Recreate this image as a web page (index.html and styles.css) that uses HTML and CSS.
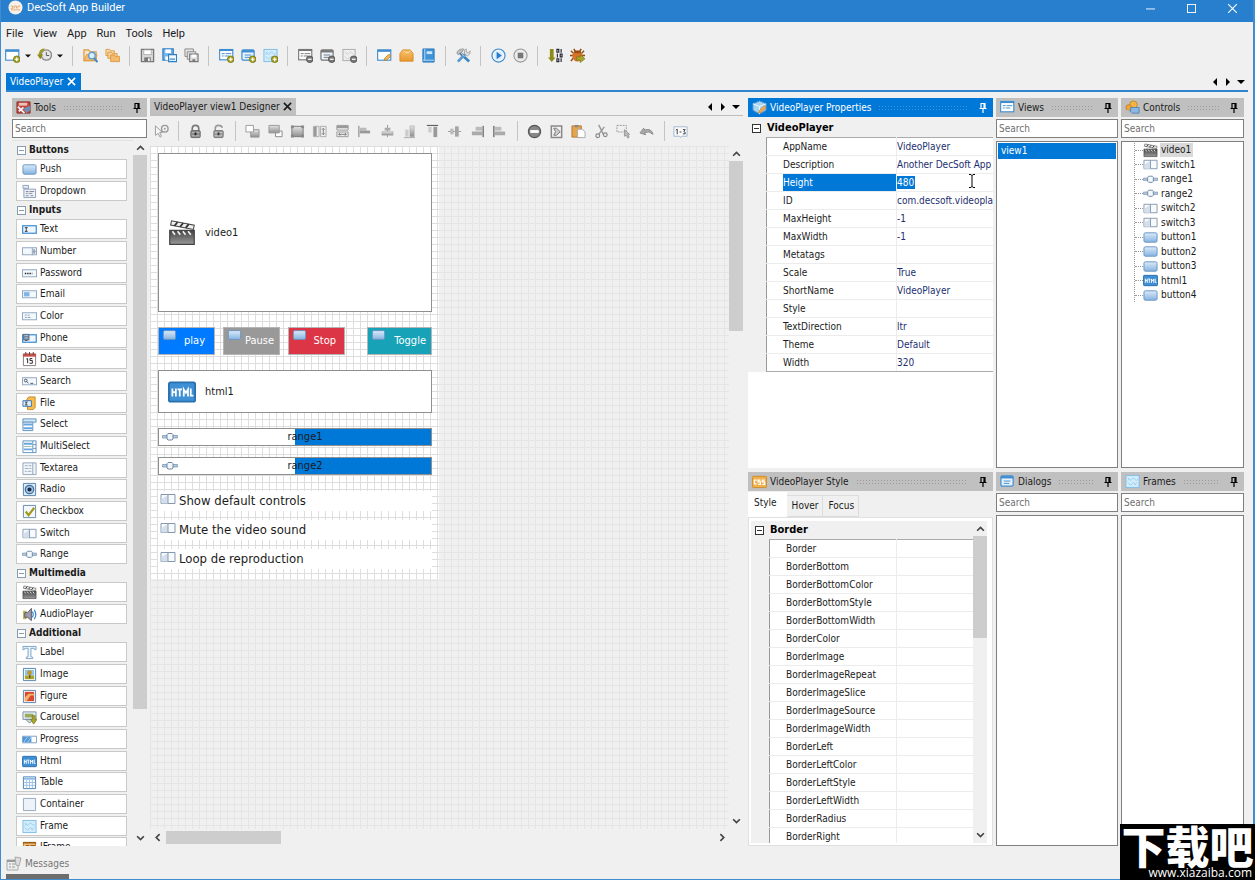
FILE: index.html
```html
<!DOCTYPE html>
<html lang="en">
<head>
<meta charset="utf-8">
<title>DecSoft App Builder</title>
<link rel="stylesheet" href="styles.css">
</head>
<body>
<svg class="sprite" aria-hidden="true">
  <defs>
    <linearGradient id="gBtn" x1="0" y1="0" x2="0" y2="1"><stop offset="0" stop-color="#dcebfa"/><stop offset="1" stop-color="#86b3e0"/></linearGradient>
    <linearGradient id="gGray" x1="0" y1="0" x2="0" y2="1"><stop offset="0" stop-color="#e4e4e4"/><stop offset="1" stop-color="#8f8f8f"/></linearGradient>
    <linearGradient id="gDark" x1="0" y1="0" x2="0" y2="1"><stop offset="0" stop-color="#444"/><stop offset="1" stop-color="#999"/></linearGradient>
    <linearGradient id="gFold" x1="0" y1="0" x2="0" y2="1"><stop offset="0" stop-color="#f7c06c"/><stop offset="1" stop-color="#e8992f"/></linearGradient>
  </defs>
  <symbol id="plus" viewBox="0 0 16 16"><circle cx="12.500" cy="12" r="3.500" fill="#a8a52a" stroke="#7d7a14"/><path d="M12.500 10v4M10.500 12h4" stroke="#fff" stroke-width="1.300"/></symbol>
  <symbol id="minus" viewBox="0 0 16 16"><circle cx="12.500" cy="12" r="3.500" fill="#777" stroke="#555"/><path d="M10.500 12h4" stroke="#fff" stroke-width="1.300"/></symbol>
  <symbol id="win" viewBox="0 0 16 16"><rect x=".7" y="2" width="14" height="11" fill="#fff" stroke="currentColor" stroke-width="1.200"/><path d="M1 3h14" stroke="currentColor" stroke-width="2.200"/></symbol>
  <symbol id="winlist" viewBox="0 0 16 16"><rect x=".7" y="1.600" width="14" height="11" fill="#fff" stroke="currentColor" stroke-width="1.200"/><path d="M1 2.500h14" stroke="currentColor" stroke-width="1.500"/><path d="M3 6h3M7 6h6M3 8.500h2M6 8.500h5" stroke="currentColor"/></symbol>
  <symbol id="dialog" viewBox="0 0 16 16"><rect x="1" y="2" width="13" height="11" rx="1.500" fill="#e8f2fc" stroke="currentColor" stroke-width="1.300"/><path d="M1 3.500h13" stroke="currentColor" stroke-width="2.500"/><path d="M4 7.500h7M4 10h6" stroke="currentColor"/></symbol>
  <symbol id="frame" viewBox="0 0 16 16"><rect x="1" y="1.500" width="14" height="13" fill="#d3ecfb" stroke="#7dbce6"/><path d="M3 4l3 3 3-3 3 3 2-2M3 9l3 3 3-3 3 3M3 7l2-2M10 12l3-3" stroke="#8fcdf0" fill="none"/></symbol>
  <symbol id="framegray" viewBox="0 0 16 16"><rect x="1" y="1.500" width="13" height="12" fill="#eee" stroke="#aaa"/><path d="M3 4l3 3 3-3 3 3M3 9l3 3 3-3" stroke="#ccc" fill="none"/></symbol>
  <symbol id="clock" viewBox="0 0 16 16"><circle cx="10" cy="7.500" r="5.500" fill="#e5e5e5" stroke="#888" stroke-width="1.400"/><path d="M10 4.500v3.500h3" stroke="#555" fill="none"/><path d="M8 1.500Q3 2 3 8" stroke="#a09c22" stroke-width="2.500" fill="none"/><path d="M0 7h6.500L3.500 12z" fill="#8f8b16"/></symbol>
  <symbol id="folder" viewBox="0 0 16 16"><path d="M1 13.500V2h5l1.500 2H14v9.500z" fill="#fbe3bd" stroke="#dc9b45" stroke-width="1.300"/><path d="M1 13.500L4 7h11l-2 6.500z" fill="#f2bb6d" stroke="#dc9b45"/></symbol>
  <symbol id="foldsearch" viewBox="0 0 16 16"><use href="#folder"/><circle cx="9.500" cy="8" r="3.500" fill="#d9edfb" stroke="#5a9bd2" stroke-width="1.400"/><path d="M12 11l3.500 4" stroke="#3b84c6" stroke-width="2"/></symbol>
  <symbol id="folders" viewBox="0 0 16 16"><path d="M1 8V1.500h4L6 3h4v5z" fill="#fbdcae" stroke="#dc9b45"/><path d="M3 11V4.500h4L8 6h5v5z" fill="#f8cf96" stroke="#dc9b45"/><path d="M6 14.500V7.500h4L11 9h4.500v5.500z" fill="#f2bb6d" stroke="#dc9b45"/></symbol>
  <symbol id="save" viewBox="0 0 16 16"><path d="M1.500 1.500h13v13h-13z" fill="#d8d8d8" stroke="#777" stroke-width="1.400"/><path d="M4 2h8v5H4z" fill="#fff" stroke="#999" stroke-width=".7"/><path d="M4.500 10h7v4.500h-7z" fill="#777"/><path d="M8.500 11h2v3h-2z" fill="#eee"/></symbol>
  <symbol id="saveas" viewBox="0 0 16 16"><path d="M1 1h11v12H1z" fill="#77b4e8" stroke="#2f7fc6" stroke-width="1.300"/><path d="M3.500 1.500h6v4h-6z" fill="#fff"/><path d="M3.500 9h4v4h-4z" fill="#fff"/><path d="M7 7h8.500v7.500H7z" fill="#f3f9ff" stroke="#2f7fc6" stroke-width="1.200"/><path d="M8 11h6v2H8z" fill="#69a9e0"/></symbol>
  <symbol id="saveall" viewBox="0 0 16 16"><path d="M1 1h9v8H1z" fill="#e5e5e5" stroke="#888"/><path d="M3.500 4h9v8h-9z" fill="#e5e5e5" stroke="#888"/><path d="M6 6.500h9v8H6z" fill="#ddd" stroke="#777" stroke-width="1.200"/><path d="M8 7h5v3H8z" fill="#fff"/><path d="M9 12h3v2.500H9z" fill="#777"/></symbol>
  <symbol id="edit" viewBox="0 0 16 16"><use href="#win"/><path d="M7.500 13.500l1-3 4.500-4 2 2-4.500 4z" fill="#f3bb57" stroke="#a67a2e" stroke-width=".8"/></symbol>
  <symbol id="box" viewBox="0 0 16 16"><path d="M1 6l3-4h8l3 4v8H1z" fill="url(#gFold)" stroke="#d88c2a"/><path d="M5 3l2 2h3l2-2" stroke="#fce0b0" fill="none"/></symbol>
  <symbol id="book" viewBox="0 0 16 16"><path d="M2 1h12v14H2z" fill="#3f93d8" stroke="#2c78b9"/><path d="M4 1v12M2 13h12" stroke="#b9dcf6"/><path d="M6 3.500h6v3H6z" fill="#cde7fa"/></symbol>
  <symbol id="toolsx" viewBox="0 0 16 16"><path d="M4 5l10 9.500" stroke="#3f86c6" stroke-width="3"/><path d="M2 14.500L11 5" stroke="#5d9bd2" stroke-width="3"/><path d="M1 6q0-5 7-5l-1 3-3 1-1 2z" fill="#c0c0c0" stroke="#999"/><path d="M9 6V2l2-1v3l2 1 2-2v3l-3 2.500z" fill="#ddd" stroke="#999" stroke-width=".8"/><path d="M5 5l4 4" stroke="#e4b898"/></symbol>
  <symbol id="play" viewBox="0 0 16 16"><circle cx="8" cy="8" r="7" fill="#d8ecfb" stroke="#3d8bce" stroke-width="1.200"/><circle cx="8" cy="8" r="5.200" fill="none" stroke="#fff"/><path d="M6 4l5.500 4L6 12z" fill="#2b7cc8"/></symbol>
  <symbol id="stop" viewBox="0 0 16 16"><circle cx="8" cy="8" r="7" fill="#ececec" stroke="#999" stroke-width="1.200"/><path d="M5 5h6v6H5z" fill="#777"/></symbol>
  <symbol id="binary" viewBox="0 0 16 16"><path d="M2 1h4v9h2l-4 5-4-5h2z" fill="#8e8a18"/><g stroke="#223" fill="none" stroke-width="1.200"><path d="M9.500 1.500h2v3h-2zM14 1v4M10 6v4M13 6.500h2v3h-2zM9.500 11.500h2v3h-2zM14 11v4"/></g></symbol>
  <symbol id="bug" viewBox="0 0 16 16"><path d="M1 3l3 3M15 3l-3 3M0 8h4M16 8h-4M1 14l3-4M4 1l2 3M12 1l-2 3" stroke="#8a4a12" stroke-width="1.500"/><ellipse cx="8" cy="8.500" rx="5.500" ry="6" fill="#d9722a"/><path d="M4.500 3h7v2.500h-7z" fill="#9a4c16"/><path d="M7 9.500h4V7l5 4.500-5 4V13H7z" fill="#a8a52a" stroke="#777414" stroke-width=".7"/></symbol>
  <symbol id="pin" viewBox="0 0 8 10"><path d="M2 .5h4v5H2zM5 1v4M.5 5.500h7M4 6v4" fill="none" stroke="currentColor" stroke-width="1.200"/></symbol>
  <symbol id="x" viewBox="0 0 10 10"><path d="M1 1l8 8M9 1L1 9" stroke="currentColor" stroke-width="1.800"/></symbol>
  <symbol id="up" viewBox="0 0 8 8"><path d="M1 6l3-3 3 3" fill="none" stroke="currentColor" stroke-width="1.500"/></symbol>
  <symbol id="dn" viewBox="0 0 8 8"><path d="M1 2l3 3 3-3" fill="none" stroke="currentColor" stroke-width="1.500"/></symbol>
  <symbol id="lt" viewBox="0 0 8 8"><path d="M5 1L2 4l3 3" fill="none" stroke="currentColor" stroke-width="1.500"/></symbol>
  <symbol id="rt" viewBox="0 0 8 8"><path d="M3 1l3 3-3 3" fill="none" stroke="currentColor" stroke-width="1.500"/></symbol>
  <symbol id="tl" viewBox="0 0 8 8"><path d="M6 0v8L2 4z" fill="currentColor"/></symbol>
  <symbol id="tr" viewBox="0 0 8 8"><path d="M2 0v8l4-4z" fill="currentColor"/></symbol>
  <symbol id="td" viewBox="0 0 8 8"><path d="M0 2h8L4 6z" fill="currentColor"/></symbol>
  <symbol id="exp" viewBox="0 0 9 9"><rect x=".5" y=".5" width="8" height="8" fill="#fff" stroke="currentColor"/><path d="M2 4.500h5" stroke="currentColor"/></symbol>

  <symbol id="pointer" viewBox="0 0 16 16"><path d="M1.500 2v10l3-2 2 4 1.500-1-2-4h3z" fill="#f6f6f6" stroke="#999"/><circle cx="11.500" cy="5" r="3.500" fill="none" stroke="#999" stroke-width="1.500"/><circle cx="11.500" cy="5" r="1" fill="#999"/></symbol>
  <symbol id="lock" viewBox="0 0 16 16"><path d="M4.500 7V5q0-3.500 3.500-3.500T11.500 5v2" fill="none" stroke="#777" stroke-width="1.700"/><rect x="3" y="7" width="10" height="7.500" rx="1" fill="#8c8c8c" stroke="#666"/><path d="M4 9h8M4 12.500h8" stroke="#bbb"/><path d="M8 9v3" stroke="#222" stroke-width="2"/></symbol>
  <symbol id="unlock" viewBox="0 0 16 16"><path d="M4.500 7V5q0-3.500 3.500-3.500T12 4" fill="none" stroke="#999" stroke-width="1.700"/><rect x="3" y="7" width="10" height="7.500" rx="1" fill="#9c9c9c" stroke="#777"/><path d="M4 9h8M4 12.500h8" stroke="#c4c4c4"/><path d="M8 9v3" stroke="#333" stroke-width="2"/></symbol>
  <symbol id="front" viewBox="0 0 16 16"><path d="M6 6h9v8H6z" fill="url(#gGray)" stroke="#999"/><path d="M1 1.500h8v7H1z" fill="#fff" stroke="#999"/></symbol>
  <symbol id="back" viewBox="0 0 16 16"><path d="M8 7.500h7v6H8z" fill="#fff" stroke="#888"/><path d="M1 1.500h11v8H1z" fill="url(#gGray)" stroke="#999"/></symbol>
  <symbol id="sizebox" viewBox="0 0 16 16"><path d="M2 2.500h12v11H2z" fill="url(#gGray)" stroke="#777"/><path d="M1 1.500h3v3H1zM12 1.500h3v3h-3zM1 11.500h3v3H1zM12 11.500h3v3h-3z" fill="#888"/></symbol>
  <symbol id="sameh" viewBox="0 0 16 16"><path d="M1.500 2.500h6v11h-6zM9 2.500h6v11H9z" fill="#eee" stroke="#aaa"/><path d="M2 3h3v10H2z" fill="#999"/><path d="M12 5v6M10.500 6L12 4.500 13.500 6M10.500 10l1.500 1.500 1.500-1.500" stroke="#777" fill="none"/></symbol>
  <symbol id="samew" viewBox="0 0 16 16"><path d="M2 1.500h12v5H2zM2 8.500h12v5H2z" fill="#eee" stroke="#999"/><path d="M2 2h12v2.500H2z" fill="#999"/><path d="M4 11h8M5.500 9.500L4 11l1.500 1.500M10.500 9.500L12 11l-1.500 1.500" stroke="#777" fill="none"/></symbol>
  <symbol id="al" viewBox="0 0 16 16"><path d="M2 2v12" stroke="#777"/><path d="M3 4h7v3H3z" fill="#bbb"/><path d="M3 7h11v3H3z" fill="#999"/></symbol>
  <symbol id="ac" viewBox="0 0 16 16"><path d="M8 1v13" stroke="#999"/><path d="M5 4h6v3H5z" fill="#aaa"/><path d="M2 8h12v4H2z" fill="url(#gGray)" stroke="#aaa" stroke-width=".5"/></symbol>
  <symbol id="ab" viewBox="0 0 16 16"><path d="M2 14.500h12" stroke="#aaa"/><path d="M3.500 6h3.500v7.500H3.500z" fill="#ccc"/><path d="M8.500 2H13v11.500H8.500z" fill="url(#gGray)" stroke="#999" stroke-width=".5"/></symbol>
  <symbol id="at" viewBox="0 0 16 16"><path d="M2 1.500h12" stroke="#444"/><path d="M3.500 3H7v6H3.500z" fill="#ccc"/><path d="M9 3h4v11H9z" fill="#999"/></symbol>
  <symbol id="am" viewBox="0 0 16 16"><path d="M1 8h14" stroke="#999"/><path d="M3.500 5H7v6H3.500z" fill="#bbb"/><path d="M8.500 2.500h4v11h-4z" fill="#a5a5a5"/></symbol>
  <symbol id="ar" viewBox="0 0 16 16"><path d="M14 2v12" stroke="#333"/><path d="M6 3h7v4H6z" fill="#bbb"/><path d="M2 8h11v4H2z" fill="#aaa"/></symbol>
  <symbol id="al2" viewBox="0 0 16 16"><path d="M2 2v12" stroke="#333"/><path d="M3 3h7v4H3z" fill="#bbb"/><path d="M3 8h11v4H3z" fill="#aaa"/></symbol>
  <symbol id="remove" viewBox="0 0 16 16"><circle cx="8" cy="8" r="6.500" fill="#888" stroke="#555" stroke-width="1.300"/><path d="M3.500 6.500h9v3h-9z" fill="#fff"/></symbol>
  <symbol id="copy" viewBox="0 0 16 16"><path d="M2.500 2h11v12.500h-11z" fill="#f4f4f4" stroke="#888" stroke-width="1.600"/><path d="M5 4.500h3l4 3.800-4 3.700H5l2-3.700z" fill="#ccc" stroke="#777"/></symbol>
  <symbol id="paste" viewBox="0 0 16 16"><path d="M1 2h10v12H1z" fill="#e5a550" stroke="#b77b2c"/><path d="M4 1h4v2.500H4z" fill="#888"/><path d="M7 5.500h5l3 3v6H7z" fill="#fff" stroke="#aaa"/></symbol>
  <symbol id="cut" viewBox="0 0 16 16"><path d="M5 1l5 10M11 3L5 11" stroke="#999" stroke-width="1.500"/><circle cx="4" cy="12.500" r="2" fill="none" stroke="#888" stroke-width="1.300"/><circle cx="12" cy="11.500" r="2" fill="none" stroke="#888" stroke-width="1.300"/></symbol>
  <symbol id="select" viewBox="0 0 16 16"><path d="M1 1.500h10v7H1z" fill="none" stroke="#999" stroke-dasharray="2 1"/><path d="M9 6v7l2-1 1.500 3 1.500-1-1.500-3h2z" fill="#bbb" stroke="#999"/></symbol>
  <symbol id="undo" viewBox="0 0 16 16"><path d="M15 11Q13 4 6 6.500L5 4.500 1 9.500l6 2-1-2.500q5-2 9 2z" fill="#aaa" stroke="#888"/></symbol>
  <symbol id="order" viewBox="0 0 16 16"><path d="M1 3h14v10H9l-1 1.500L7 13H1z" fill="#fff" stroke="#9db3cc"/><path d="M3 6.500l1.500-1V11M7 8.500h2M10.500 6H13L11.500 8 13 9v1.500h-2.500" stroke="#333" fill="none"/></symbol>

  <symbol id="push" viewBox="0 0 16 16"><rect x="1" y="3" width="14" height="10" rx="1.500" fill="url(#gBtn)" stroke="#6893c0"/></symbol>
  <symbol id="drop" viewBox="0 0 16 16"><path d="M1 1.500h6v3H1zM2 5.500h12.500v9H2z" fill="#edf2f9" stroke="#8b9db8"/><path d="M4 8h3M8 8h5M4 10h2M7 10h4M4 12.500h3M9 12.500h3" stroke="#889"/></symbol>
  <symbol id="field" viewBox="0 0 16 16"><rect x=".5" y="4" width="15" height="7.500" fill="#f3f8fd" stroke="#8ea6bf"/></symbol>
  <symbol id="text" viewBox="0 0 16 16"><rect x=".7" y="4" width="14.500" height="8" fill="#eef7ff" stroke="#3f8dd0" stroke-width="1.300"/><path d="M3 6h3M3 10h3M4.500 6v4" stroke="#333"/></symbol>
  <symbol id="number" viewBox="0 0 16 16"><use href="#field"/><path d="M11 4v8M11 8h4" stroke="#8ea6bf"/><path d="M12 6.500h2M12 9.500h2" stroke="#456"/></symbol>
  <symbol id="password" viewBox="0 0 16 16"><use href="#field"/><path d="M3 8h8" stroke="#222" stroke-width="1.500" stroke-dasharray="1.500 1"/></symbol>
  <symbol id="email" viewBox="0 0 16 16"><use href="#field"/><path d="M2 5.500h6V10H2z" fill="#7fb5e6"/></symbol>
  <symbol id="color" viewBox="0 0 16 16"><use href="#field"/><path d="M3 6.500h2M3 9h2M6 6.500h2M6 9h3" stroke="#89a"/></symbol>
  <symbol id="phone" viewBox="0 0 16 16"><use href="#text"/><path d="M1 3h7v7H1z" fill="#667b90"/><path d="M2.500 5h4M2.500 7.500h4" stroke="#c9d5e2"/></symbol>
  <symbol id="date" viewBox="0 0 16 16"><path d="M1.500 2h13v12.500h-13z" fill="#fff" stroke="#877"/><path d="M1 2h14v3H1z" fill="#c4524a"/><path d="M4 0v3M8 0v3M12 0v3" stroke="#733"/><path d="M4.500 7.500L6 7v5M11 7H8.500v2H11v3H8" stroke="#222" fill="none"/></symbol>
  <symbol id="search" viewBox="0 0 16 16"><use href="#field"/><circle cx="4" cy="7" r="1.500" fill="none" stroke="#456"/><path d="M5 8l2 2M9 10h3" stroke="#456"/></symbol>
  <symbol id="file" viewBox="0 0 16 16"><path d="M5 4l2-3h7v11l-2 2.500H6z" fill="#f6bd4e" stroke="#c4882a"/><path d="M1 5h9v6H1z" fill="#e2effb" stroke="#3672ae"/><path d="M3 6.500h3M3 9.500h3M4.500 6.500v3" stroke="#345"/></symbol>
  <symbol id="sel" viewBox="0 0 16 16"><path d="M1 2h14v3.500H1z" fill="#d7e9f8" stroke="#5d8fbd"/><path d="M1 5.500h10.500v9H1z" fill="#fff" stroke="#5d8fbd"/><path d="M1.500 8h10M1.500 12h10" stroke="#6aa6dc" stroke-width="2"/></symbol>
  <symbol id="msel" viewBox="0 0 16 16"><path d="M1 2h14v12.500H1z" fill="#fff" stroke="#5d8fbd"/><path d="M11.500 2v12.500M12 6h3M12 10h3" stroke="#5d8fbd"/><path d="M2 5h9M2 11h9" stroke="#6aa6dc" stroke-width="2"/><path d="M2 8h8" stroke="#9bb"/></symbol>
  <symbol id="tarea" viewBox="0 0 16 16"><path d="M1 2h14v12.500H1z" fill="#f2f6fa" stroke="#8fa4ba"/><path d="M11.500 2v12.500" stroke="#8fa4ba"/><path d="M3 5h3M7 5h3M3 8h4M8 8h2M3 11h2M6 11h4" stroke="#9ab"/></symbol>
  <symbol id="radio" viewBox="0 0 16 16"><path d="M1.500 1.500h13v13h-13z" fill="#dcebf9" stroke="#5581ab"/><circle cx="8" cy="8" r="4.500" fill="#a4c3e2" stroke="#466f9a" stroke-width="1.300"/><circle cx="8" cy="8" r="2.200" fill="#182c46"/></symbol>
  <symbol id="check" viewBox="0 0 16 16"><path d="M1.500 1.500h13v13h-13z" fill="#f4f8fc" stroke="#6488ad"/><path d="M4 8l3 4 6-8" stroke="#a19a1a" stroke-width="2.300" fill="none"/></symbol>
  <symbol id="switch" viewBox="0 0 16 16"><path d="M1 3.500h14v9H1z" fill="#f7fafd" stroke="#8698ad"/><path d="M8 4v8.500H1.500V8z" fill="#d3dfec"/><path d="M8 3.500v9" stroke="#8698ad"/></symbol>
  <symbol id="range" viewBox="0 0 16 16"><path d="M.5 6.500h15v2.500H.5z" fill="#b3c9df" stroke="#8099b3" stroke-width=".8"/><path d="M5 5.500l1-1h4l1 1v4.500l-1 1H6l-1-1z" fill="#f4f8fc" stroke="#6c87a5"/></symbol>
  <symbol id="clap" viewBox="0 0 16 16"><path d="M1 6.500h14v8H1z" fill="url(#gDark)" stroke="#444" stroke-width=".7"/><path d="M1.500 3.500l.5-2.500 13 2.500-.5 2.500z" fill="#eee" stroke="#444" stroke-width=".6"/><path d="M5.500 1.700L3.700 3.900M8.700 2.300L6.900 4.500M11.900 2.900L10.100 5.100" stroke="#333" stroke-width="1"/><path d="M2.500 7L4 9M5.500 7L7 9M8.500 7L10 9M11.500 7L13 9" stroke="#eee" stroke-width="1"/></symbol>
  <symbol id="audio" viewBox="0 0 16 16"><path d="M1 4h4v9H1z" fill="#bdb85c"/><path d="M3 6h3l4-4.500v13L6 11H3z" fill="#9c9cae" stroke="#556"/><path d="M11 5q2 3 0 6M13 3q3.500 5 0 10" stroke="#3d85c6" stroke-width="1.300" fill="none"/></symbol>
  <symbol id="label" viewBox="0 0 16 16"><path d="M1 1.500h14V5h-1.500L13 3.500H9.500v9l2 .5v1.500h-7V13l2-.5v-9H3L2.500 5H1z" fill="#eef6fd" stroke="#7a9fc4"/></symbol>
  <symbol id="image" viewBox="0 0 16 16"><path d="M1.500 1.500h13v13h-13z" fill="#fff" stroke="#5581ab"/><path d="M3 3h10v6H3z" fill="#8fc7f1"/><path d="M3 9h10v4H3z" fill="#a8a52a"/><path d="M7.500 7h1.500v5H7.500z" fill="#654"/><circle cx="8" cy="6" r="2.500" fill="#bf9a26"/></symbol>
  <symbol id="figure" viewBox="0 0 16 16"><path d="M1.500 1.500h13v13h-13z" fill="#fff" stroke="#5581ab"/><path d="M3 3h10v10H3z" fill="#d9482f"/><path d="M3 9l4-4h6v2H9l-4 6H3z" fill="#f3b26b"/></symbol>
  <symbol id="carousel" viewBox="0 0 16 16"><path d="M1 2h14v8H1z" fill="#e3eef8" stroke="#7d8fa5"/><path d="M3 4h9v4H3z" fill="#9aab5a"/><path d="M4 10h8l-4 4z" fill="#cdd" stroke="#789"/><path d="M11 6h3v4h2l-3.500 5L9 10h2z" fill="#a8a52a" stroke="#777414" stroke-width=".7"/></symbol>
  <symbol id="progress" viewBox="0 0 16 16"><path d="M.5 4.500h15v7H.5z" fill="#fff" stroke="#7b9cbe"/><path d="M1 5h9v6H1z" fill="#4f97d6"/><path d="M2 11l4-6M6 11l4-6" stroke="#a9d0f1"/></symbol>
  <symbol id="html" viewBox="0 0 16 16"><rect x=".5" y="2.500" width="15" height="11" rx="1" fill="#3f8fd4" stroke="#2a6fae"/><path d="M2.500 6v4.500M4.500 6v4.500M2.500 8h2M5.500 6.500h2.500M6.700 6.500v4M9 10.500V6.500l1.200 2 1.200-2v4M13 6v4h1.500" stroke="#fff" fill="none"/></symbol>
  <symbol id="table" viewBox="0 0 16 16"><path d="M1.500 2h13v12.500h-13z" fill="#fff" stroke="#4580b5"/><path d="M2 3h12v2H2z" fill="#8cbce8"/><path d="M5 5v9M8 5v9M11 5v9M2 8h12M2 11h12" stroke="#9cc0e0"/></symbol>
  <symbol id="container" viewBox="0 0 16 16"><path d="M1.500 1.500h13v13h-13z" fill="#eef3fa" stroke="#91a5bd"/></symbol>
  <symbol id="iframe" viewBox="0 0 16 16"><path d="M1.500 2.500h13v12h-13z" fill="#f0c078" stroke="#b57424"/><path d="M1 3h14M4 6h3v4M9 6h4v4" stroke="#9a5c18" stroke-width="1.500" fill="none"/></symbol>
  <symbol id="toolbox" viewBox="0 0 16 16"><path d="M1 2h14v12H1z" fill="#c4453b" stroke="#8c2f28"/><path d="M3 3h9v3H3z" fill="#eac2be"/><path d="M2 7l7 7M3 12l5-4" stroke="#e8eef5" stroke-width="2"/><path d="M8 9l7-3v5l-4 3z" fill="#6e8fb5"/></symbol>
  <symbol id="cube" viewBox="0 0 16 16"><path d="M8 1l7 3v7l-7 4-7-4V4z" fill="#a9d5f5" stroke="#4a92cf"/><path d="M1 4l7 3 7-3M8 7v8" stroke="#f2f9ff" fill="none"/><path d="M7 14l1-3 5-5 2 2-5 5z" fill="#f3ae4f" stroke="#b77b2c" stroke-width=".7"/></symbol>
  <symbol id="controls" viewBox="0 0 16 16"><circle cx="9" cy="5" r="4" fill="#f5b545" stroke="#c98a22"/><circle cx="4" cy="8" r="3" fill="#f0a53d" stroke="#c47f22"/><path d="M6 8h9v6H6z" fill="#8ab7e4" stroke="#5584b3"/><path d="M2 11l5 4" stroke="#bbb" stroke-width="2"/></symbol>
  <symbol id="css" viewBox="0 0 16 16"><rect x=".5" y="2.500" width="15" height="12" rx="1" fill="#f0b04c" stroke="#cf8a28"/><path d="M5 6.500H2.500v4H5M9 6.500H6.500v2H9v2.500H6.500M13.500 6.500H11v2h2.500v2.500H11" stroke="#fff" stroke-width="1.300" fill="none"/></symbol>
  <symbol id="msg" viewBox="0 0 16 16"><path d="M1 4h11v10H1z" fill="#eee" stroke="#aaa"/><path d="M1 5h11" stroke="#999" stroke-width="2"/><path d="M3 8h2M6 8h4M3 11h2M6 11h3" stroke="#999"/><path d="M9 1l6 1-2 8-3-1z" fill="#ddd" stroke="#aaa"/></symbol>
</svg>

<div class="window">
  <header class="titlebar">
    <svg class="logo" viewBox="0 0 16 16"><circle cx="8" cy="8" r="7.500" fill="#f7f1ea"/><path d="M3 9h2V6.500H3M6.500 9V6.500H9V9M10.500 9V6.500H13M3 10.500h10" stroke="#e5a66c" fill="none"/></svg>
    <h1>DecSoft App Builder</h1>
    <div class="caption">
      <button aria-label="Minimize"><svg viewBox="0 0 10 10"><path d="M0 5.500h10" stroke="#fff"/></svg></button>
      <button aria-label="Maximize"><svg viewBox="0 0 10 10"><rect x=".5" y=".5" width="9" height="9" fill="none" stroke="#fff"/></svg></button>
      <button aria-label="Close"><svg viewBox="0 0 10 10"><path d="M0 0l10 10M10 0L0 10" stroke="#fff" stroke-width="1.200"/></svg></button>
    </div>
  </header>
  <nav class="menubar">
    <button>File</button><button>View</button><button>App</button><button>Run</button><button>Tools</button><button>Help</button>
  </nav>
  <div class="toolbar main-tools">
    <button class="drop blue" aria-label="New"><svg><use href="#win"/><use href="#plus"/></svg><svg class="caret"><use href="#td"/></svg></button>
    <button class="drop" aria-label="Recent"><svg><use href="#clock"/></svg><svg class="caret"><use href="#td"/></svg></button>
    <i></i>
    <button aria-label="Open"><svg><use href="#foldsearch"/></svg></button>
    <button aria-label="Open samples"><svg><use href="#folders"/></svg></button>
    <i></i>
    <button aria-label="Save"><svg><use href="#save"/></svg></button>
    <button aria-label="Save as"><svg><use href="#saveas"/></svg></button>
    <button aria-label="Save all"><svg><use href="#saveall"/></svg></button>
    <i></i>
    <button class="blue" aria-label="Add view"><svg><use href="#winlist"/><use href="#plus"/></svg></button>
    <button class="blue" aria-label="Add dialog"><svg><use href="#dialog"/><use href="#plus"/></svg></button>
    <button aria-label="Add frame"><svg><use href="#frame"/><use href="#plus"/></svg></button>
    <i></i>
    <button class="gray" aria-label="Remove view"><svg><use href="#winlist"/><use href="#minus"/></svg></button>
    <button class="gray" aria-label="Remove dialog"><svg><use href="#dialog"/><use href="#minus"/></svg></button>
    <button aria-label="Remove frame"><svg><use href="#framegray"/><use href="#minus"/></svg></button>
    <i></i>
    <button class="blue" aria-label="Edit"><svg><use href="#edit"/></svg></button>
    <button aria-label="Files"><svg><use href="#box"/></svg></button>
    <button aria-label="Manual"><svg><use href="#book"/></svg></button>
    <i></i>
    <button aria-label="Options"><svg><use href="#toolsx"/></svg></button>
    <i></i>
    <button aria-label="Run"><svg><use href="#play"/></svg></button>
    <button aria-label="Stop"><svg><use href="#stop"/></svg></button>
    <i></i>
    <button aria-label="Build"><svg><use href="#binary"/></svg></button>
    <button aria-label="Debug"><svg><use href="#bug"/></svg></button>
  </div>
  <div class="apptabs">
    <div class="apptab">VideoPlayer <button aria-label="Close VideoPlayer"><svg><use href="#x"/></svg></button></div>
    <div class="tabnav"><button aria-label="Previous"><svg><use href="#tl"/></svg></button><button aria-label="Next"><svg><use href="#tr"/></svg></button><button aria-label="List"><svg><use href="#td"/></svg></button></div>
  </div>

  <main class="workspace">
    <section class="panel tools">
      <h2 class="head"><svg><use href="#toolbox"/></svg>Tools<span class="dots"></span><svg class="pin"><use href="#pin"/></svg></h2>
      <input class="find" type="text" placeholder="Search" aria-label="Search tools">
      <div class="scroller">
        <div class="toollist">
          <h3><svg><use href="#exp"/></svg>Buttons</h3>
          <ul>
            <li><button><svg><use href="#push"/></svg>Push</button></li>
            <li><button><svg><use href="#drop"/></svg>Dropdown</button></li>
          </ul>
          <h3><svg><use href="#exp"/></svg>Inputs</h3>
          <ul>
            <li><button><svg><use href="#text"/></svg>Text</button></li>
            <li><button><svg><use href="#number"/></svg>Number</button></li>
            <li><button><svg><use href="#password"/></svg>Password</button></li>
            <li><button><svg><use href="#email"/></svg>Email</button></li>
            <li><button><svg><use href="#color"/></svg>Color</button></li>
            <li><button><svg><use href="#phone"/></svg>Phone</button></li>
            <li><button><svg><use href="#date"/></svg>Date</button></li>
            <li><button><svg><use href="#search"/></svg>Search</button></li>
            <li><button><svg><use href="#file"/></svg>File</button></li>
            <li><button><svg><use href="#sel"/></svg>Select</button></li>
            <li><button><svg><use href="#msel"/></svg>MultiSelect</button></li>
            <li><button><svg><use href="#tarea"/></svg>Textarea</button></li>
            <li><button><svg><use href="#radio"/></svg>Radio</button></li>
            <li><button><svg><use href="#check"/></svg>Checkbox</button></li>
            <li><button><svg><use href="#switch"/></svg>Switch</button></li>
            <li><button><svg><use href="#range"/></svg>Range</button></li>
          </ul>
          <h3><svg><use href="#exp"/></svg>Multimedia</h3>
          <ul>
            <li><button><svg><use href="#clap"/></svg>VideoPlayer</button></li>
            <li><button><svg><use href="#audio"/></svg>AudioPlayer</button></li>
          </ul>
          <h3><svg><use href="#exp"/></svg>Additional</h3>
          <ul>
            <li><button><svg><use href="#label"/></svg>Label</button></li>
            <li><button><svg><use href="#image"/></svg>Image</button></li>
            <li><button><svg><use href="#figure"/></svg>Figure</button></li>
            <li><button><svg><use href="#carousel"/></svg>Carousel</button></li>
            <li><button><svg><use href="#progress"/></svg>Progress</button></li>
            <li><button><svg><use href="#html"/></svg>Html</button></li>
            <li><button><svg><use href="#table"/></svg>Table</button></li>
            <li><button><svg><use href="#container"/></svg>Container</button></li>
            <li><button><svg><use href="#frame"/></svg>Frame</button></li>
            <li><button><svg><use href="#iframe"/></svg>IFrame</button></li>
          </ul>
        </div>
        <div class="vbar"><button aria-label="Up"><svg><use href="#up"/></svg></button><div class="track"><span class="thumb t-tools"></span></div><button aria-label="Down"><svg><use href="#dn"/></svg></button></div>
      </div>
    </section>

    <section class="designer">
      <div class="doctabs">
        <div class="doctab">VideoPlayer view1 Designer <button aria-label="Close designer"><svg><use href="#x"/></svg></button></div>
        <div class="tabnav"><button aria-label="Previous"><svg><use href="#tl"/></svg></button><button aria-label="Next"><svg><use href="#tr"/></svg></button><button aria-label="List"><svg><use href="#td"/></svg></button></div>
      </div>
      <div class="toolbar design-tools">
        <button aria-label="Pointer"><svg><use href="#pointer"/></svg></button>
        <i></i>
        <button aria-label="Lock"><svg><use href="#lock"/></svg></button>
        <button aria-label="Unlock"><svg><use href="#unlock"/></svg></button>
        <i></i>
        <button aria-label="Bring to front"><svg><use href="#front"/></svg></button>
        <button aria-label="Send to back"><svg><use href="#back"/></svg></button>
        <button aria-label="Size"><svg><use href="#sizebox"/></svg></button>
        <button aria-label="Same height"><svg><use href="#sameh"/></svg></button>
        <button aria-label="Same width"><svg><use href="#samew"/></svg></button>
        <button aria-label="Align left"><svg><use href="#al"/></svg></button>
        <button aria-label="Align center"><svg><use href="#ac"/></svg></button>
        <button aria-label="Align bottom"><svg><use href="#ab"/></svg></button>
        <button aria-label="Align top"><svg><use href="#at"/></svg></button>
        <button aria-label="Align middle"><svg><use href="#am"/></svg></button>
        <button aria-label="Align right"><svg><use href="#ar"/></svg></button>
        <button aria-label="Align start"><svg><use href="#al2"/></svg></button>
        <i></i>
        <button aria-label="Remove"><svg><use href="#remove"/></svg></button>
        <button aria-label="Copy"><svg><use href="#copy"/></svg></button>
        <button aria-label="Paste"><svg><use href="#paste"/></svg></button>
        <button aria-label="Cut"><svg><use href="#cut"/></svg></button>
        <button aria-label="Select"><svg><use href="#select"/></svg></button>
        <button aria-label="Undo"><svg><use href="#undo"/></svg></button>
        <i></i>
        <button aria-label="Tab order"><svg><use href="#order"/></svg></button>
      </div>
      <div class="scroller">
        <div class="surface">
          <div class="page">
            <div class="w-box w-video"><svg><use href="#clap"/></svg>video1</div>
            <div class="w-buttons">
              <button class="w-play"><svg><use href="#push"/></svg>play</button>
              <button class="w-pause"><svg><use href="#push"/></svg>Pause</button>
              <button class="w-stop"><svg><use href="#push"/></svg>Stop</button>
              <button class="w-toggle"><svg><use href="#push"/></svg>Toggle</button>
            </div>
            <div class="w-box w-html"><svg><use href="#html"/></svg>html1</div>
            <div class="w-range"><svg><use href="#range"/></svg>range1</div>
            <div class="w-range"><svg><use href="#range"/></svg>range2</div>
            <div class="w-switches">
              <div><svg><use href="#switch"/></svg>Show default controls</div>
              <div><svg><use href="#switch"/></svg>Mute the video sound</div>
              <div><svg><use href="#switch"/></svg>Loop de reproduction</div>
            </div>
          </div>
        </div>
        <div class="vbar"><button aria-label="Up"><svg><use href="#up"/></svg></button><div class="track"><span class="thumb t-design"></span></div><button aria-label="Down"><svg><use href="#dn"/></svg></button></div>
      </div>
      <div class="hbar"><button aria-label="Left"><svg><use href="#lt"/></svg></button><div class="track"><span class="thumb"></span></div><button aria-label="Right"><svg><use href="#rt"/></svg></button></div>
    </section>

    <div class="inspectors">
      <section class="panel props">
        <h2 class="head active"><svg><use href="#cube"/></svg>VideoPlayer Properties<span class="dots"></span><svg class="pin"><use href="#pin"/></svg></h2>
        <div class="grid">
          <h3><svg><use href="#exp"/></svg>VideoPlayer</h3>
          <table>
            <tr><th scope="row">AppName</th><td>VideoPlayer</td></tr>
            <tr><th scope="row">Description</th><td>Another DecSoft App Builder</td></tr>
            <tr class="current"><th scope="row"><label for="height">Height</label></th><td><input id="height" type="text" value="480"><svg class="ibeam" viewBox="0 0 8 14"><path d="M1 .5h2l1 1 1-1h2M4 1v12M1 13.500h2l1-1 1 1h2" fill="none" stroke="#000"/></svg></td></tr>
            <tr><th scope="row">ID</th><td>com.decsoft.videoplayer</td></tr>
            <tr><th scope="row">MaxHeight</th><td>-1</td></tr>
            <tr><th scope="row">MaxWidth</th><td>-1</td></tr>
            <tr><th scope="row">Metatags</th><td></td></tr>
            <tr><th scope="row">Scale</th><td>True</td></tr>
            <tr><th scope="row">ShortName</th><td>VideoPlayer</td></tr>
            <tr><th scope="row">Style</th><td></td></tr>
            <tr><th scope="row">TextDirection</th><td>ltr</td></tr>
            <tr><th scope="row">Theme</th><td>Default</td></tr>
            <tr><th scope="row">Width</th><td>320</td></tr>
          </table>
        </div>
      </section>

      <section class="panel">
        <h2 class="head"><svg class="blue"><use href="#winlist"/></svg>Views<span class="dots"></span><svg class="pin"><use href="#pin"/></svg></h2>
        <input class="find" type="text" placeholder="Search" aria-label="Search views">
        <ul class="list"><li class="picked">view1</li></ul>
      </section>

      <section class="panel">
        <h2 class="head"><svg><use href="#controls"/></svg>Controls<span class="dots"></span><svg class="pin"><use href="#pin"/></svg></h2>
        <input class="find" type="text" placeholder="Search" aria-label="Search controls">
        <div class="list">
          <ul class="tree">
            <li class="picked"><svg><use href="#clap"/></svg><span>video1</span></li>
            <li><svg><use href="#switch"/></svg><span>switch1</span></li>
            <li><svg><use href="#range"/></svg><span>range1</span></li>
            <li><svg><use href="#range"/></svg><span>range2</span></li>
            <li><svg><use href="#switch"/></svg><span>switch2</span></li>
            <li><svg><use href="#switch"/></svg><span>switch3</span></li>
            <li><svg><use href="#push"/></svg><span>button1</span></li>
            <li><svg><use href="#push"/></svg><span>button2</span></li>
            <li><svg><use href="#push"/></svg><span>button3</span></li>
            <li><svg><use href="#html"/></svg><span>html1</span></li>
            <li><svg><use href="#push"/></svg><span>button4</span></li>
          </ul>
        </div>
      </section>

      <section class="panel style">
        <h2 class="head"><svg><use href="#css"/></svg>VideoPlayer Style<span class="dots"></span><svg class="pin"><use href="#pin"/></svg></h2>
        <div class="subtabs"><button class="on">Style</button><button>Hover</button><button>Focus</button></div>
        <div class="tabpage">
          <div class="grid">
            <h3><svg><use href="#exp"/></svg>Border</h3>
            <table>
              <tr><th scope="row">Border</th><td></td></tr>
              <tr><th scope="row">BorderBottom</th><td></td></tr>
              <tr><th scope="row">BorderBottomColor</th><td></td></tr>
              <tr><th scope="row">BorderBottomStyle</th><td></td></tr>
              <tr><th scope="row">BorderBottomWidth</th><td></td></tr>
              <tr><th scope="row">BorderColor</th><td></td></tr>
              <tr><th scope="row">BorderImage</th><td></td></tr>
              <tr><th scope="row">BorderImageRepeat</th><td></td></tr>
              <tr><th scope="row">BorderImageSlice</th><td></td></tr>
              <tr><th scope="row">BorderImageSource</th><td></td></tr>
              <tr><th scope="row">BorderImageWidth</th><td></td></tr>
              <tr><th scope="row">BorderLeft</th><td></td></tr>
              <tr><th scope="row">BorderLeftColor</th><td></td></tr>
              <tr><th scope="row">BorderLeftStyle</th><td></td></tr>
              <tr><th scope="row">BorderLeftWidth</th><td></td></tr>
              <tr><th scope="row">BorderRadius</th><td></td></tr>
              <tr><th scope="row">BorderRight</th><td></td></tr>
            </table>
          </div>
          <div class="vbar"><button aria-label="Up"><svg><use href="#up"/></svg></button><div class="track"><span class="thumb t-style"></span></div><button aria-label="Down"><svg><use href="#dn"/></svg></button></div>
        </div>
      </section>

      <section class="panel">
        <h2 class="head"><svg class="blue"><use href="#dialog"/></svg>Dialogs<span class="dots"></span><svg class="pin"><use href="#pin"/></svg></h2>
        <input class="find" type="text" placeholder="Search" aria-label="Search dialogs">
        <ul class="list"></ul>
      </section>

      <section class="panel">
        <h2 class="head"><svg><use href="#frame"/></svg>Frames<span class="dots"></span><svg class="pin"><use href="#pin"/></svg></h2>
        <input class="find" type="text" placeholder="Search" aria-label="Search frames">
        <ul class="list"></ul>
      </section>
    </div>
  </main>

  <footer class="status"><button><svg><use href="#msg"/></svg>Messages</button></footer>
</div>

<div class="watermark"><strong lang="zh">下载吧</strong><span>www.xiazaiba.com</span></div>
</body>
</html>
```
FILE: styles.css
```css
* { box-sizing: border-box; }
body {
  margin: 0;
  height: 100vh;
  overflow: hidden;
  background: #f0f0f0;
  color: #1b1b1b;
  font: 10px/14px "DejaVu Sans Condensed", "DejaVu Sans", sans-serif;
}
button, input { font: inherit; color: inherit; }
button { display: flex; align-items: center; justify-content: center; margin: 0; padding: 0; border: 0; background: none; }
ul { list-style: none; margin: 0; padding: 0; }
h1, h2, h3 { margin: 0; font-size: inherit; font-weight: normal; }
svg { flex: none; display: block; width: 16px; height: 16px; }
.sprite { position: absolute; width: 0; height: 0; }
.blue { color: #3f8dd0; }
.gray { color: #777; }

.window {
  display: flex;
  flex-direction: column;
  height: 100vh;
  border: solid #3f8dd0;
  border-width: 0 2px 1px 1px;
}

.titlebar { display: flex; align-items: flex-start; height: 22px; padding-left: 7px; background: #287fce; color: #fff; }
.titlebar h1 { flex: 1; padding-left: 4px; font: 11px/16px Roboto, "Open Sans", sans-serif; }
.logo { width: 15px; height: 15px; }
.caption { display: flex; }
.caption button { width: 41px; height: 16px; }
.caption svg { width: 9px; height: 9px; }

.menubar { display: flex; gap: 10px; height: 22px; padding: 2px 5px 0; font: 11px/20px Roboto, "Open Sans", sans-serif; }
.toolbar { display: flex; align-items: center; }
.toolbar button { width: 22px; height: 22px; }
.toolbar svg { width: 15px; height: 15px; }
.toolbar i { width: 13px; height: 20px; border-left: 1px solid #c4c4c4; margin-left: 6px; margin-right: -6px; }
.main-tools { height: 23px; padding-left: 4px; }
.main-tools .drop { width: 32px; justify-content: flex-start; }
.main-tools .caret { width: 6px; height: 6px; margin-left: 5px; color: #111; }
.main-tools .drop + i { margin-left: 3px; }

.apptabs { display: flex; justify-content: space-between; align-items: flex-end; height: 25px; margin: 0 5px; padding-right: 3px; border-bottom: 2px solid #2f86cf; }
.apptab { display: flex; align-items: center; gap: 4px; height: 17px; padding: 0 5px 0 4px; background: #0078d7; color: #fff; }
.apptab svg, .doctab svg { width: 9px; height: 9px; }
.tabnav { display: flex; align-self: center; gap: 5px; color: #000; }
.tabnav svg { width: 8px; height: 8px; }
.apptabs .tabnav { align-self: flex-end; padding-bottom: 4px; }

.workspace { flex: 1; display: flex; gap: 3px; min-height: 0; padding: 6px 9px 0 11px; }
.panel { display: flex; flex-direction: column; min-width: 0; min-height: 0; }
.head { display: flex; align-items: center; gap: 3px; height: 19px; margin-bottom: 2px; padding: 0 6px 0 4px; background: #c0c0c0; white-space: nowrap; }
.head svg { width: 15px; height: 15px; }
.head .dots { flex: 1; height: 5px; margin: 0 8px 0 4px; background: radial-gradient(circle, #999 28%, transparent 36%) 0 0 / 3px 3px; }
.head .pin { width: 8px; height: 10px; color: #000; }
.head.active { background: #0078d7; color: #fff; }
.head.active .pin { color: #fff; }
.head.active .dots { background-image: radial-gradient(circle, #3b95e0 28%, transparent 36%); }
.find { width: 100%; height: 19px; padding: 0 2px; border: 1px solid #7f7f7f; border-radius: 0; background: #fff; outline: none; }
.find::placeholder { color: #6f6f6f; opacity: 1; }
.scroller { flex: 1; display: flex; min-height: 0; }

.tools { width: 135px; }
.tools .scroller { padding-top: 2px; }
.toollist { flex: 1; overflow: hidden; padding: 0 6px 0 4px; border-top: 1px solid #e2e2e2; }
.toollist h3 { display: flex; align-items: center; gap: 3px; height: 18px; padding-left: 1px; font-weight: bold; }
.toollist h3 svg { width: 9px; height: 9px; color: #8a9cb0; }
.toollist button { justify-content: flex-start; gap: 3px; width: 100%; height: 20px; padding-left: 5px; border: 1px solid #c9c9c9; background: #fff; }
.toollist li { padding-bottom: 2px; }
.toollist li:nth-child(3n) { padding-bottom: 1px; }
.toollist li:last-child { padding-bottom: 0; }
.toollist svg { width: 15px; height: 15px; }

.vbar { display: flex; flex-direction: column; width: 14px; background: #f0f0f0; color: #444; }
.vbar button, .hbar button { width: 14px; height: 15px; }
.vbar svg, .hbar svg { width: 9px; height: 9px; }
.track { flex: 1; display: flex; flex-direction: inherit; }
.thumb { background: #cdcdcd; }
.t-tools { height: 82%; }
.t-design { height: 26%; }
.t-style { height: 35%; }

.designer { flex: 1; display: flex; flex-direction: column; min-width: 0; margin-right: 2px; }
.doctabs { display: flex; justify-content: space-between; height: 18px; padding-right: 3px; border-bottom: 1px solid #bdbdbd; }
.doctab { display: flex; align-items: center; gap: 3px; padding: 0 4px; background: #c0c0c0; }
.design-tools { max-width: 543px; height: 30px; padding-right: 1px; }
.design-tools button { flex: 1; min-width: 0; }
.design-tools i { width: 12px; }
.surface {
  flex: 1;
  min-width: 0;
  background: linear-gradient(#e5e5e5 1px, transparent 1px) 0 0 / 7px 7px, linear-gradient(90deg, #e5e5e5 1px, transparent 1px) 0 0 / 7px 7px, #f0f0f0;
}
.page {
  display: flex;
  flex-direction: column;
  width: 289px;
  padding: 7px 7px 10px 8px;
  background: linear-gradient(#dedede 1px, transparent 1px) 0 0 / 7px 7px, linear-gradient(90deg, #dedede 1px, transparent 1px) 0 0 / 7px 7px, #fff;
  font-size: 11px;
  line-height: 16px;
}
.w-box { display: flex; align-items: center; gap: 9px; padding-left: 9px; border: 1px solid #8f8f8f; background: #fff; }
.w-box svg { width: 28px; height: 28px; }
.w-video { height: 159px; margin-bottom: 15px; }
.w-html { height: 43px; margin-bottom: 15px; }
.w-buttons { display: flex; gap: 8px; height: 28px; margin-bottom: 15px; }
.w-buttons button { position: relative; flex: none; justify-content: flex-end; width: 57px; padding-right: 9px; border: 1px solid #b5b5b5; color: #fff; }
.w-buttons svg { position: absolute; left: 3px; top: 0; width: 15px; height: 14px; }
.w-buttons .w-play { background: #007bff; }
.w-buttons .w-pause { background: #999; padding-right: 5px; }
.w-buttons .w-stop { background: #dc3545; padding-right: 8px; }
.w-buttons .w-toggle { width: 65px; margin-left: auto; padding-right: 5px; background: #17a2b8; }
.w-range { position: relative; height: 18px; margin-bottom: 11px; padding-left: 20px; border: 1px solid #8f8f8f; background: linear-gradient(90deg, #fff 50%, #0078d7 50%); text-align: center; }
.w-range svg { position: absolute; left: 3px; top: 0; }
.w-range + .w-range { margin-bottom: 16px; }
.w-switches { display: grid; gap: 9px; font-size: 13px; }
.w-switches div { display: flex; align-items: center; gap: 3px; height: 20px; padding-left: 2px; background: #fff; }
.w-switches svg { align-self: flex-start; }

.hbar { display: flex; height: 17px; padding-right: 14px; align-items: center; color: #444; }
.hbar button { width: 16px; }
.hbar .thumb { width: 21%; height: 13px; }

.inspectors {
  flex: none;
  display: grid;
  grid-template-columns: 245px 122px 123px;
  grid-template-rows: 370fr 374fr;
  gap: 4px 3px;
}
.grid { flex: 1; min-width: 0; overflow: hidden; }
.grid h3 { display: flex; align-items: center; gap: 6px; height: 18px; padding-left: 4px; font-weight: bold; font-size: 11px; color: #000; }
.grid h3 svg { width: 9px; height: 9px; color: #333; }
.grid table { width: calc(100% - 18px); margin-left: 18px; border-collapse: collapse; table-layout: fixed; background: #fff; box-shadow: -18px 0 #f0f0f0; }
.grid th, .grid td { height: 18px; padding: 0; border-bottom: 1px solid #ececec; font-weight: normal; text-align: left; white-space: nowrap; overflow: hidden; }
.grid th { width: 130px; padding-left: 16px; border-left: 1px solid #999; border-right: 1px solid #ececec; }
.grid td { color: #1d2f70; }
.grid tr:first-child > * { border-top: 1px solid #aaa; }
.props .grid { background: #fff; }
.props .grid h3 { background: #f0f0f0; }
.props .grid tr:last-child > * { border-bottom-color: #aaa; }
.current label { display: block; height: 17px; line-height: 17px; background: #0078d7; color: #fff; }
.current td { position: relative; }
.current input { display: block; width: 18px; height: 13px; padding: 0; border: 0; background: #0078d7; color: #fff; }
.ibeam { position: absolute; left: 71px; top: 0; width: 8px; height: 14px; }

.list { flex: 1; margin-top: 3px; padding: 1px; border: 1px solid #7f7f7f; background: #fff; }
.list > .picked { height: 16px; padding-left: 3px; line-height: 16px; background: #0078d7; color: #fff; }
.tree { width: fit-content; margin-left: 11px; border-left: 1px dotted #999; }
.tree li { display: flex; align-items: center; gap: 2px; height: 14px; }
.tree li:nth-child(even) { height: 15px; }
.tree li::before { content: ""; width: 8px; border-top: 1px dotted #999; margin-right: -2px; }
.tree svg { width: 15px; height: 15px; }
.tree span { padding: 0 2px 0 1px; }
.tree .picked span { background: #d9d9d9; }

.subtabs { display: flex; align-items: flex-end; height: 26px; padding-top: 2px; }
.subtabs button { height: 22px; padding: 0 4px 0 5px; border: 1px solid #dcdcdc; border-left: 0; }
.subtabs .on { height: 25px; padding: 0 10px 4px 6px; border: 0; background: #fff; }
.style .head { margin-bottom: 0; }
.style .grid th { width: 127px; }
.tabpage { flex: 1; display: flex; min-height: 0; padding: 3px 5px 2px 2px; border: 1px solid #e0e0e0; background: #fff; }
.tabpage .grid { background: #f0f0f0; }

.status { display: flex; align-items: flex-start; height: 33px; padding: 10px 5px 0; color: #777; }
.status button { gap: 3px; height: 23px; padding-bottom: 2px; border-bottom: 5px solid #6d6d6d; }

.watermark {
  position: absolute;
  right: 0;
  bottom: 0;
  display: flex;
  flex-direction: column;
  align-items: center;
  width: 135px;
  height: 56px;
  background: #000;
  color: #fff;
}
.watermark strong { font: 900 44px/42px "Noto Sans CJK SC", sans-serif; }
.watermark span { align-self: flex-end; padding-right: 3px; font: 12px/14px "Open Sans", sans-serif; }
```
